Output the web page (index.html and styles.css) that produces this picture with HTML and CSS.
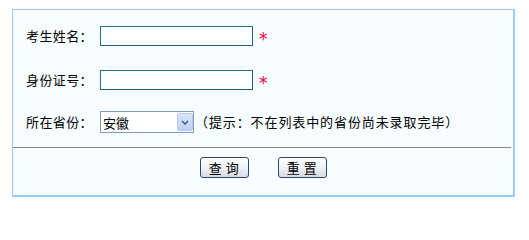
FILE: index.html
```html
<!DOCTYPE html>
<html lang="zh-CN">
<head>
<meta charset="utf-8">
<title>成绩查询</title>
<link rel="stylesheet" href="styles.css">
</head>
<body>
<form class="panel">
  <div class="row row-tall">
    <label class="label">考生姓名：</label>
    <input class="field" type="text">
    <span class="req">*</span>
  </div>
  <div class="row row-tall">
    <label class="label">身份证号：</label>
    <input class="field" type="text">
    <span class="req">*</span>
  </div>
  <div class="row row-select">
    <label class="label">所在省份：</label>
    <div class="select-box">
      <select class="select"><option>安徽</option></select>
      <span class="arrow"><svg width="8" height="5" viewBox="0 0 8 5"><path d="M1 1 L4 4 L7 1" fill="none" stroke="#4a5f88" stroke-width="1.6"/></svg></span>
    </div>
    <span class="hint">（提示：不在列表中的省份尚未录取完毕）</span>
  </div>
  <hr class="divider">
  <div class="actions">
    <button class="btn" type="button">查 询</button>
    <button class="btn" type="reset">重 置</button>
  </div>
</form>
</body>
</html>
```
FILE: styles.css
```css
html, body {
  margin: 0;
  background: #ffffff;
}
body {
  padding: 9px 14px 0 12px;
  font-family: "Noto Sans CJK SC", "Noto Sans", sans-serif;
  font-size: 13px;
  letter-spacing: 0.4px;
  color: #000000;
}
.panel {
  box-sizing: border-box;
  width: 503px;
  margin: 0;
  border-style: solid;
  border-color: #99ccff;
  border-width: 1px 2px 2px 1px;
  background: #f7fcff;
  padding: 4px 0 17px;
}
.row {
  display: flex;
  align-items: center;
  padding-left: 13px;
}
.row-tall {
  height: 44px;
}
.row-select {
  height: 40px;
}
.label {
  flex: none;
  width: 74px;
  line-height: 16px;
}
.field {
  box-sizing: border-box;
  width: 153px;
  height: 20px;
  margin: 0;
  padding: 0 2px;
  border: 1px solid #2a7396;
  border-bottom-color: #1d5e7e;
  border-right-color: #1d5e7e;
  background: #ffffff;
  font: inherit;
  outline: none;
}
.req {
  margin-left: 6px;
  padding-top: 6px;
  color: #f0003c;
  font-family: "DejaVu Sans", sans-serif;
  font-size: 17px;
  line-height: 17px;
}
.select-box {
  box-sizing: border-box;
  display: flex;
  width: 94px;
  height: 22px;
  border: 1px solid #7f9db9;
  background: #ffffff;
}
.select {
  -webkit-appearance: none;
  appearance: none;
  flex: 1;
  min-width: 0;
  margin: 0;
  padding: 0 0 0 2px;
  border: 0;
  background: transparent;
  font: inherit;
  color: #000000;
  outline: none;
}
.arrow {
  box-sizing: border-box;
  flex: none;
  width: 16px;
  margin: 1px 0 1px 0;
  border: 1px solid #b6c9f4;
  border-radius: 2px;
  background: linear-gradient(#dbe6fd, #bccef7);
  display: flex;
  align-items: center;
  justify-content: center;
}
.hint {
  margin-left: 1px;
  line-height: 16px;
  letter-spacing: 0.9px;
}
.divider {
  height: 0;
  margin: 5px 2px 0 0;
  border: 0;
  border-top: 1px solid #878787;
}
.actions {
  display: flex;
  justify-content: center;
  gap: 29px;
  margin-top: 9px;
}
.btn {
  box-sizing: border-box;
  width: 49px;
  height: 21px;
  margin: 0;
  padding: 0;
  border: 1px solid #2a4775;
  border-radius: 3px;
  background: linear-gradient(#ffffff, #eef0f5 55%, #d6dae6);
  font-family: "Noto Sans CJK SC", sans-serif;
  font-size: 13px;
  letter-spacing: 0.5px;
  line-height: 17px;
  color: #000000;
}
```
